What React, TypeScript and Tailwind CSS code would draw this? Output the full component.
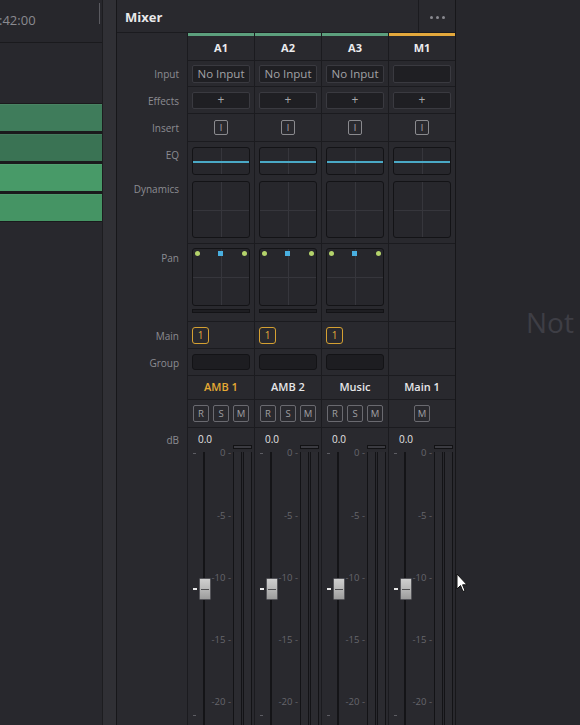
import React from 'react'

type Channel = {
  id: string
  bar: string
  input: string | null
  pan: boolean
  main: boolean
  name: string
  active: boolean
  buttons: string[]
}

const channels: Channel[] = [
  { id: 'A1', bar: 'bg-[#5c9f7d]', input: 'No Input', pan: true, main: true, name: 'AMB 1', active: true, buttons: ['R', 'S', 'M'] },
  { id: 'A2', bar: 'bg-[#5c9f7d]', input: 'No Input', pan: true, main: true, name: 'AMB 2', active: false, buttons: ['R', 'S', 'M'] },
  { id: 'A3', bar: 'bg-[#5c9f7d]', input: 'No Input', pan: true, main: true, name: 'Music', active: false, buttons: ['R', 'S', 'M'] },
  { id: 'M1', bar: 'bg-[#e3a83c]', input: null, pan: false, main: false, name: 'Main 1', active: false, buttons: ['M'] },
]

const ticks = [
  { t: '0', y: 25 },
  { t: '-5', y: 88 },
  { t: '-10', y: 150 },
  { t: '-15', y: 212 },
  { t: '-20', y: 274 },
]

const tracks = ['bg-[#3f7c5b]', 'bg-[#3a7354]', 'bg-[#489a68]', 'bg-[#459464]']

function Cell({ className = '', children }: { className?: string; children?: React.ReactNode }) {
  return (
    <div className={`flex w-[67px] shrink-0 border-b border-l border-[#1b1b1f] ${className}`}>
      {children}
    </div>
  )
}

function Label({ children, className = '' }: { children?: React.ReactNode; className?: string }) {
  return (
    <div className={`flex w-[70px] shrink-0 justify-end pr-[8px] text-[10px] leading-[12px] text-[#8c8c92] ${className}`}>
      {children}
    </div>
  )
}

function Fader() {
  return (
    <div className="relative h-full w-full overflow-hidden">
      <span className="absolute left-[10px] top-[5px] text-[10px] leading-[12px] text-[#e4e4e4]">0.0</span>
      <div className="absolute bottom-0 left-[15px] top-[24px] w-[2px] bg-[#141417]" />
      <div className="absolute left-[5px] top-[25px] h-px w-[3px] bg-[#5d5d63]" />
      <div className="absolute left-[5px] top-[287px] h-px w-[3px] bg-[#5d5d63]" />
      {ticks.map((k) => (
        <span
          key={k.t}
          className="absolute left-[18px] w-[25px] whitespace-nowrap text-right text-[9.5px] leading-[12px] text-[#66666c]"
          style={{ top: k.y - 6 }}
        >
          {k.t} -
        </span>
      ))}
      <div className="absolute left-[45px] top-[17px] h-[4px] w-[19px] border border-[#121214] bg-[#3b3b41]" />
      <div className="absolute bottom-0 left-[45px] top-[24px] flex gap-px">
        <div className="w-[9px] border-x border-[#131316] bg-[#2b2b30]" />
        <div className="w-[9px] border-x border-[#131316] bg-[#2b2b30]" />
      </div>
      <div className="absolute left-[5px] top-[160px] h-[2px] w-[4px] bg-[#e8e8e8]" />
      <div className="absolute left-[11px] top-[150px] flex h-[22px] w-[12px] flex-col justify-center rounded-[1px] border border-[#55555a] bg-gradient-to-b from-[#cfcfcf] via-[#b8b8b8] to-[#9c9c9c]">
        <div className="mx-px h-px bg-[#4f4f52]" />
      </div>
    </div>
  )
}

function Grid({ eq }: { eq?: boolean }) {
  return (
    <div className="relative h-full w-full">
      <div className="absolute bottom-0 left-1/2 top-0 w-px bg-[#36363c]" />
      {!eq && <div className="absolute left-0 right-0 top-1/2 h-px bg-[#36363c]" />}
      {eq && <div className="absolute left-0 right-0 top-[13px] h-[2px] bg-[#4aa9c6]" />}
    </div>
  )
}

function Mixer() {
  return (
    <div className="flex h-full w-[340px] shrink-0 flex-col border-l border-r border-[#17171a] bg-[#29292e]">
      <div className="flex h-[33px] shrink-0 border-b border-[#1b1b1f]">
        <div className="flex flex-1 items-center pl-[8px] pt-[4px] text-[13px] font-bold text-[#e8e8ea]">Mixer</div>
        <div className="flex w-[37px] items-center justify-center gap-[3px] border-l border-[#1b1b1f] pt-[2px]">
          <span className="h-[3px] w-[3px] rounded-full bg-[#8a8a90]" />
          <span className="h-[3px] w-[3px] rounded-full bg-[#8a8a90]" />
          <span className="h-[3px] w-[3px] rounded-full bg-[#8a8a90]" />
        </div>
      </div>

      <div className="flex h-[3px] shrink-0">
        <Label />
        {channels.map((c) => (
          <div key={c.id} className="w-[67px] shrink-0 border-l border-[#1b1b1f]">
            <div className={`h-full ${c.bar}`} />
          </div>
        ))}
      </div>

      <div className="flex h-[25px] shrink-0">
        <Label />
        {channels.map((c) => (
          <Cell key={c.id} className="items-center justify-center text-[11px] font-bold text-[#ececee]">
            {c.id}
          </Cell>
        ))}
      </div>

      <div className="flex h-[26px] shrink-0">
        <Label className="items-center">Input</Label>
        {channels.map((c) => (
          <Cell key={c.id} className="items-center px-[4px]">
            <div className="flex h-[18px] w-full items-center justify-center rounded-[2px] border border-[#3a3a40] bg-[#1f1f23] text-[11.5px] text-[#a2a2a6]">
              {c.input}
            </div>
          </Cell>
        ))}
      </div>

      <div className="flex h-[27px] shrink-0">
        <Label className="items-center">Effects</Label>
        {channels.map((c) => (
          <Cell key={c.id} className="items-center px-[4px]">
            <div className="flex h-[17px] w-full items-center justify-center rounded-[2px] border border-[#3a3a40] bg-[#1f1f23] text-[12px] leading-none text-[#a8a8ac]">
              +
            </div>
          </Cell>
        ))}
      </div>

      <div className="flex h-[28px] shrink-0">
        <Label className="items-center">Insert</Label>
        {channels.map((c) => (
          <Cell key={c.id} className="items-center justify-center">
            <div className="flex h-[15px] w-[14px] items-center justify-center rounded-[2px] border border-[#8a8a8e] text-[9px] leading-none text-[#b0b0b4]">
              I
            </div>
          </Cell>
        ))}
      </div>

      <div className="flex h-[102px] shrink-0">
        <div className="flex w-[70px] shrink-0 flex-col items-end pr-[8px] pt-[7px] text-[10px] leading-[12px] text-[#8c8c92]">
          <span>EQ</span>
          <span className="mt-[22px]">Dynamics</span>
        </div>
        {channels.map((c) => (
          <Cell key={c.id} className="flex-col gap-[6px] px-[4px] pt-[5px]">
            <div className="h-[28px] w-full rounded-[3px] border border-[#131316] bg-[#27272c]">
              <Grid eq />
            </div>
            <div className="h-[57px] w-full rounded-[3px] border border-[#131316] bg-[#27272c]">
              <Grid />
            </div>
          </Cell>
        ))}
      </div>

      <div className="flex h-[78px] shrink-0">
        <Label className="pt-[8px]">Pan</Label>
        {channels.map((c) => (
          <Cell key={c.id} className="flex-col gap-[3px] px-[4px] pt-[4px]">
            {c.pan && (
              <>
                <div className="relative h-[58px] w-full rounded-[3px] border border-[#131316] bg-[#27272c]">
                  <Grid />
                  <span className="absolute left-[2px] top-[2px] h-[5px] w-[5px] rounded-full bg-[#b4d36b]" />
                  <span className="absolute right-[2px] top-[2px] h-[5px] w-[5px] rounded-full bg-[#b4d36b]" />
                  <span className="absolute left-[25px] top-[2px] h-[5px] w-[5px] bg-[#49afe0]" />
                </div>
                <div className="h-[4px] w-full border border-[#131316] bg-[#1e1e22]" />
              </>
            )}
          </Cell>
        ))}
      </div>

      <div className="flex h-[27px] shrink-0">
        <Label className="items-center">Main</Label>
        {channels.map((c) => (
          <Cell key={c.id} className="items-center px-[4px]">
            {c.main && (
              <div className="flex h-[17px] w-[17px] items-center justify-center rounded-[3px] border border-[#d4a032] text-[10px] leading-none text-[#e2ab3b]">
                1
              </div>
            )}
          </Cell>
        ))}
      </div>

      <div className="flex h-[27px] shrink-0">
        <Label className="items-center">Group</Label>
        {channels.map((c) => (
          <Cell key={c.id} className="items-center px-[4px]">
            {c.main && <div className="h-[16px] w-full rounded-[3px] border border-[#131316] bg-[#1d1d21]" />}
          </Cell>
        ))}
      </div>

      <div className="flex h-[24px] shrink-0">
        <Label />
        {channels.map((c) => (
          <Cell
            key={c.id}
            className={`items-center justify-center text-[11px] font-semibold ${c.active ? 'text-[#e5a934]' : 'text-[#e6e6e8]'}`}
          >
            {c.name}
          </Cell>
        ))}
      </div>

      <div className="flex h-[28px] shrink-0">
        <Label />
        {channels.map((c) => (
          <Cell key={c.id} className="items-center justify-center gap-[4px]">
            {c.buttons.map((b) => (
              <div
                key={b}
                className="flex h-[17px] w-[16px] items-center justify-center rounded-[2px] border border-[#6a6a70] text-[9.5px] leading-none text-[#a0a0a4]"
              >
                {b}
              </div>
            ))}
          </Cell>
        ))}
      </div>

      <div className="flex min-h-0 flex-1">
        <Label className="pt-[6px]">dB</Label>
        {channels.map((c) => (
          <div key={c.id} className="w-[67px] shrink-0 border-l border-[#1b1b1f]">
            <Fader />
          </div>
        ))}
      </div>
    </div>
  )
}

function Timeline() {
  return (
    <div className="flex h-full w-[103px] shrink-0 flex-col border-r border-[#1d1d20] bg-[#28282d]">
      <div className="relative flex h-[43px] shrink-0 items-center border-b border-[#1a1a1d] bg-[#27272c]">
        <span className="-ml-px text-[13px] text-[#8a8a90]">:42:00</span>
        <div className="absolute left-[99px] top-[3px] h-[21px] w-px bg-[#5a5a60]" />
      </div>
      <div className="mt-[60px] flex flex-col gap-[3px] bg-[#1a1a1c] py-px">
        {tracks.map((t, i) => (
          <div key={i} className={`h-[27px] border-t border-white/5 ${t}`} />
        ))}
      </div>
    </div>
  )
}

export default function App() {
  return (
    <div
      className="relative flex h-[725px] w-[580px] overflow-hidden bg-[#28282d]"
      style={{ fontFamily: '"Open Sans", "Liberation Sans", sans-serif' }}
    >
      <Timeline />
      <div className="h-full w-[13px] shrink-0 bg-[#303035]" />
      <Mixer />
      <div className="flex-1 bg-[#27272c] pl-[70px] pt-[305px]">
        <span className="whitespace-nowrap text-[28px] leading-[34px] text-[#3e3e45]">Not</span>
      </div>
      <svg className="absolute left-[456px] top-[573px]" width="13" height="21" viewBox="0 0 13 21">
        <path d="M1 1 L1 16 L4.5 12.5 L7 18.5 L9 17.6 L6.6 11.8 L11 11.8 Z" fill="#fff" stroke="#111" strokeWidth="1" />
      </svg>
    </div>
  )
}
